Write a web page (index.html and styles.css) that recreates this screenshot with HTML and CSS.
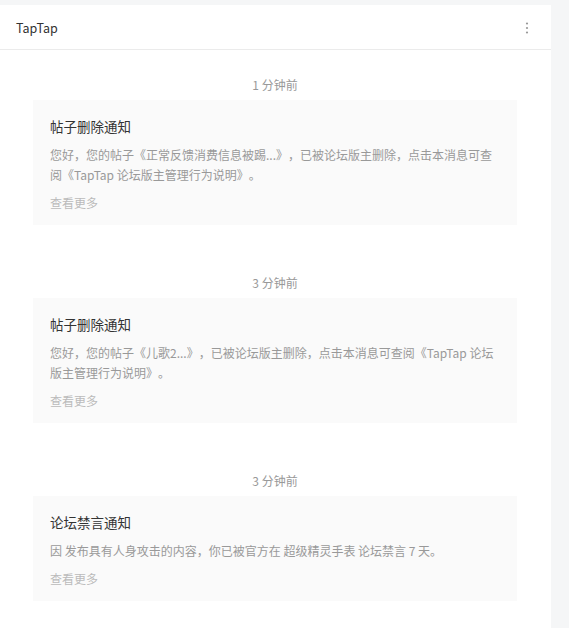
FILE: index.html
```html
<!DOCTYPE html>
<html lang="zh-CN">
<head>
<meta charset="utf-8">
<title>TapTap</title>
<link rel="stylesheet" href="styles.css">
</head>
<body>
<div class="panel">
  <header class="header">
    <span class="header-title">TapTap</span>
    <button class="more-btn" aria-label="更多">
      <svg width="4" height="12" viewBox="0 0 4 12"><circle cx="2" cy="1.5" r="1.1" fill="#999"/><circle cx="2" cy="6" r="1.1" fill="#999"/><circle cx="2" cy="10.5" r="1.1" fill="#999"/></svg>
    </button>
  </header>
  <main class="list">
    <section class="item">
      <div class="time">1 分钟前</div>
      <div class="card">
        <div class="card-title">帖子删除通知</div>
        <div class="card-body">您好，您的帖子《正常反馈消费信息被踢...》，已被论坛版主删除，点击本消息可查阅《TapTap 论坛版主管理行为说明》。</div>
        <div class="card-more">查看更多</div>
      </div>
    </section>
    <section class="item">
      <div class="time">3 分钟前</div>
      <div class="card">
        <div class="card-title">帖子删除通知</div>
        <div class="card-body">您好，您的帖子《儿歌2...》，已被论坛版主删除，点击本消息可查阅《TapTap 论坛版主管理行为说明》。</div>
        <div class="card-more">查看更多</div>
      </div>
    </section>
    <section class="item">
      <div class="time">3 分钟前</div>
      <div class="card">
        <div class="card-title">论坛禁言通知</div>
        <div class="card-body">因 发布具有人身攻击的内容，你已被官方在 超级精灵手表 论坛禁言 7 天。</div>
        <div class="card-more">查看更多</div>
      </div>
    </section>
  </main>
</div>
</body>
</html>
```
FILE: styles.css
```css
html, body {
  margin: 0;
  padding: 0;
  background: #f5f6f7;
  font-family: "Noto Sans CJK SC", "Noto Sans", sans-serif;
  text-spacing-trim: space-all;
}
body {
  padding-top: 5px;
}
.panel {
  width: 551px;
  background: #ffffff;
  min-height: 640px;
}
.header {
  height: 43px;
  border-bottom: 1px solid #ebebeb;
  display: flex;
  align-items: center;
  justify-content: space-between;
  padding: 1px 22px 0 16px;
}
.header-title {
  font-size: 12.5px;
  color: #333;
}
.more-btn {
  border: 0;
  background: none;
  padding: 0;
  display: flex;
  align-items: center;
}
.list {
  padding: 25px 34px 20px 33px;
  display: flex;
  flex-direction: column;
  gap: 48px;
}
.time {
  text-align: center;
  font-size: 12px;
  line-height: 20px;
  color: #999;
  margin-bottom: 5px;
}
.card {
  background: #fafafa;
  padding: 15px 17px 12px;
}
.card-title {
  font-size: 13.5px;
  line-height: 22px;
  color: #333;
}
.card-body {
  margin-top: 8px;
  font-size: 12px;
  line-height: 20px;
  color: #999;
}
.card-more {
  margin-top: 8px;
  font-size: 12px;
  line-height: 20px;
  color: #bbb;
}
```
